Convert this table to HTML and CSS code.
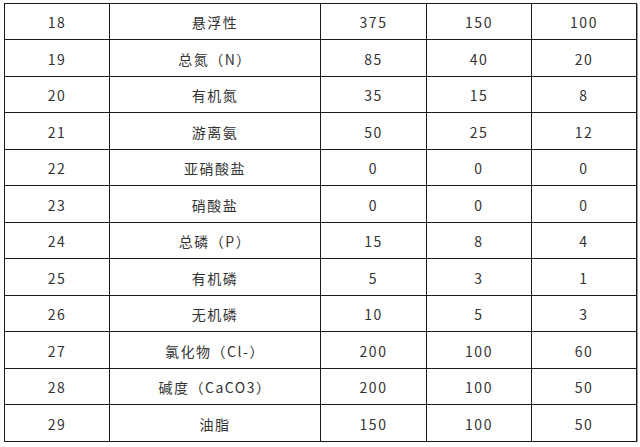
FILE: index.html
```html
<!DOCTYPE html>
<html lang="zh">
<head>
<meta charset="utf-8">
<link rel="stylesheet" href="styles.css">
</head>
<body>
<div class="data">
  <div class="cell">18</div><div class="cell">悬浮性</div><div class="cell">375</div><div class="cell">150</div><div class="cell">100</div>
  <div class="cell">19</div><div class="cell">总氮（N）</div><div class="cell">85</div><div class="cell">40</div><div class="cell">20</div>
  <div class="cell">20</div><div class="cell">有机氮</div><div class="cell">35</div><div class="cell">15</div><div class="cell">8</div>
  <div class="cell">21</div><div class="cell">游离氨</div><div class="cell">50</div><div class="cell">25</div><div class="cell">12</div>
  <div class="cell">22</div><div class="cell">亚硝酸盐</div><div class="cell">0</div><div class="cell">0</div><div class="cell">0</div>
  <div class="cell">23</div><div class="cell">硝酸盐</div><div class="cell">0</div><div class="cell">0</div><div class="cell">0</div>
  <div class="cell">24</div><div class="cell">总磷（P）</div><div class="cell">15</div><div class="cell">8</div><div class="cell">4</div>
  <div class="cell">25</div><div class="cell">有机磷</div><div class="cell">5</div><div class="cell">3</div><div class="cell">1</div>
  <div class="cell">26</div><div class="cell">无机磷</div><div class="cell">10</div><div class="cell">5</div><div class="cell">3</div>
  <div class="cell">27</div><div class="cell">氯化物（Cl-）</div><div class="cell">200</div><div class="cell">100</div><div class="cell">60</div>
  <div class="cell">28</div><div class="cell">碱度（CaCO3）</div><div class="cell">200</div><div class="cell">100</div><div class="cell">50</div>
  <div class="cell">29</div><div class="cell">油脂</div><div class="cell">150</div><div class="cell">100</div><div class="cell">50</div>
</div>
</body>
</html>
```

FILE: styles.css
```css
html, body {
  margin: 0;
  padding: 0;
  background: #ffffff;
}
body {
  padding: 3px 0 0 4px;
  font-family: "Noto Sans CJK SC", "Noto Sans", sans-serif;
  color: #333333;
}
.data {
  display: grid;
  width: 632px;
  grid-template-columns: 105px 211px 106px 105px 105px;
  grid-template-rows: 36px 37px 36px 37px 36px 37px 36px 37px 36px 37px 36px 37px;
  border-top: 1px solid #1a1a1a;
  border-left: 1px solid #1a1a1a;
  box-shadow: 1px 1px 0 #9a9a9a;
  font-size: 14px;
}
.cell {
  display: flex;
  align-items: center;
  justify-content: center;
  border-right: 1px solid #1a1a1a;
  border-bottom: 1px solid #1a1a1a;
  letter-spacing: 1.5px;
  line-height: 20px;
  padding-top: 1px;
}
```
